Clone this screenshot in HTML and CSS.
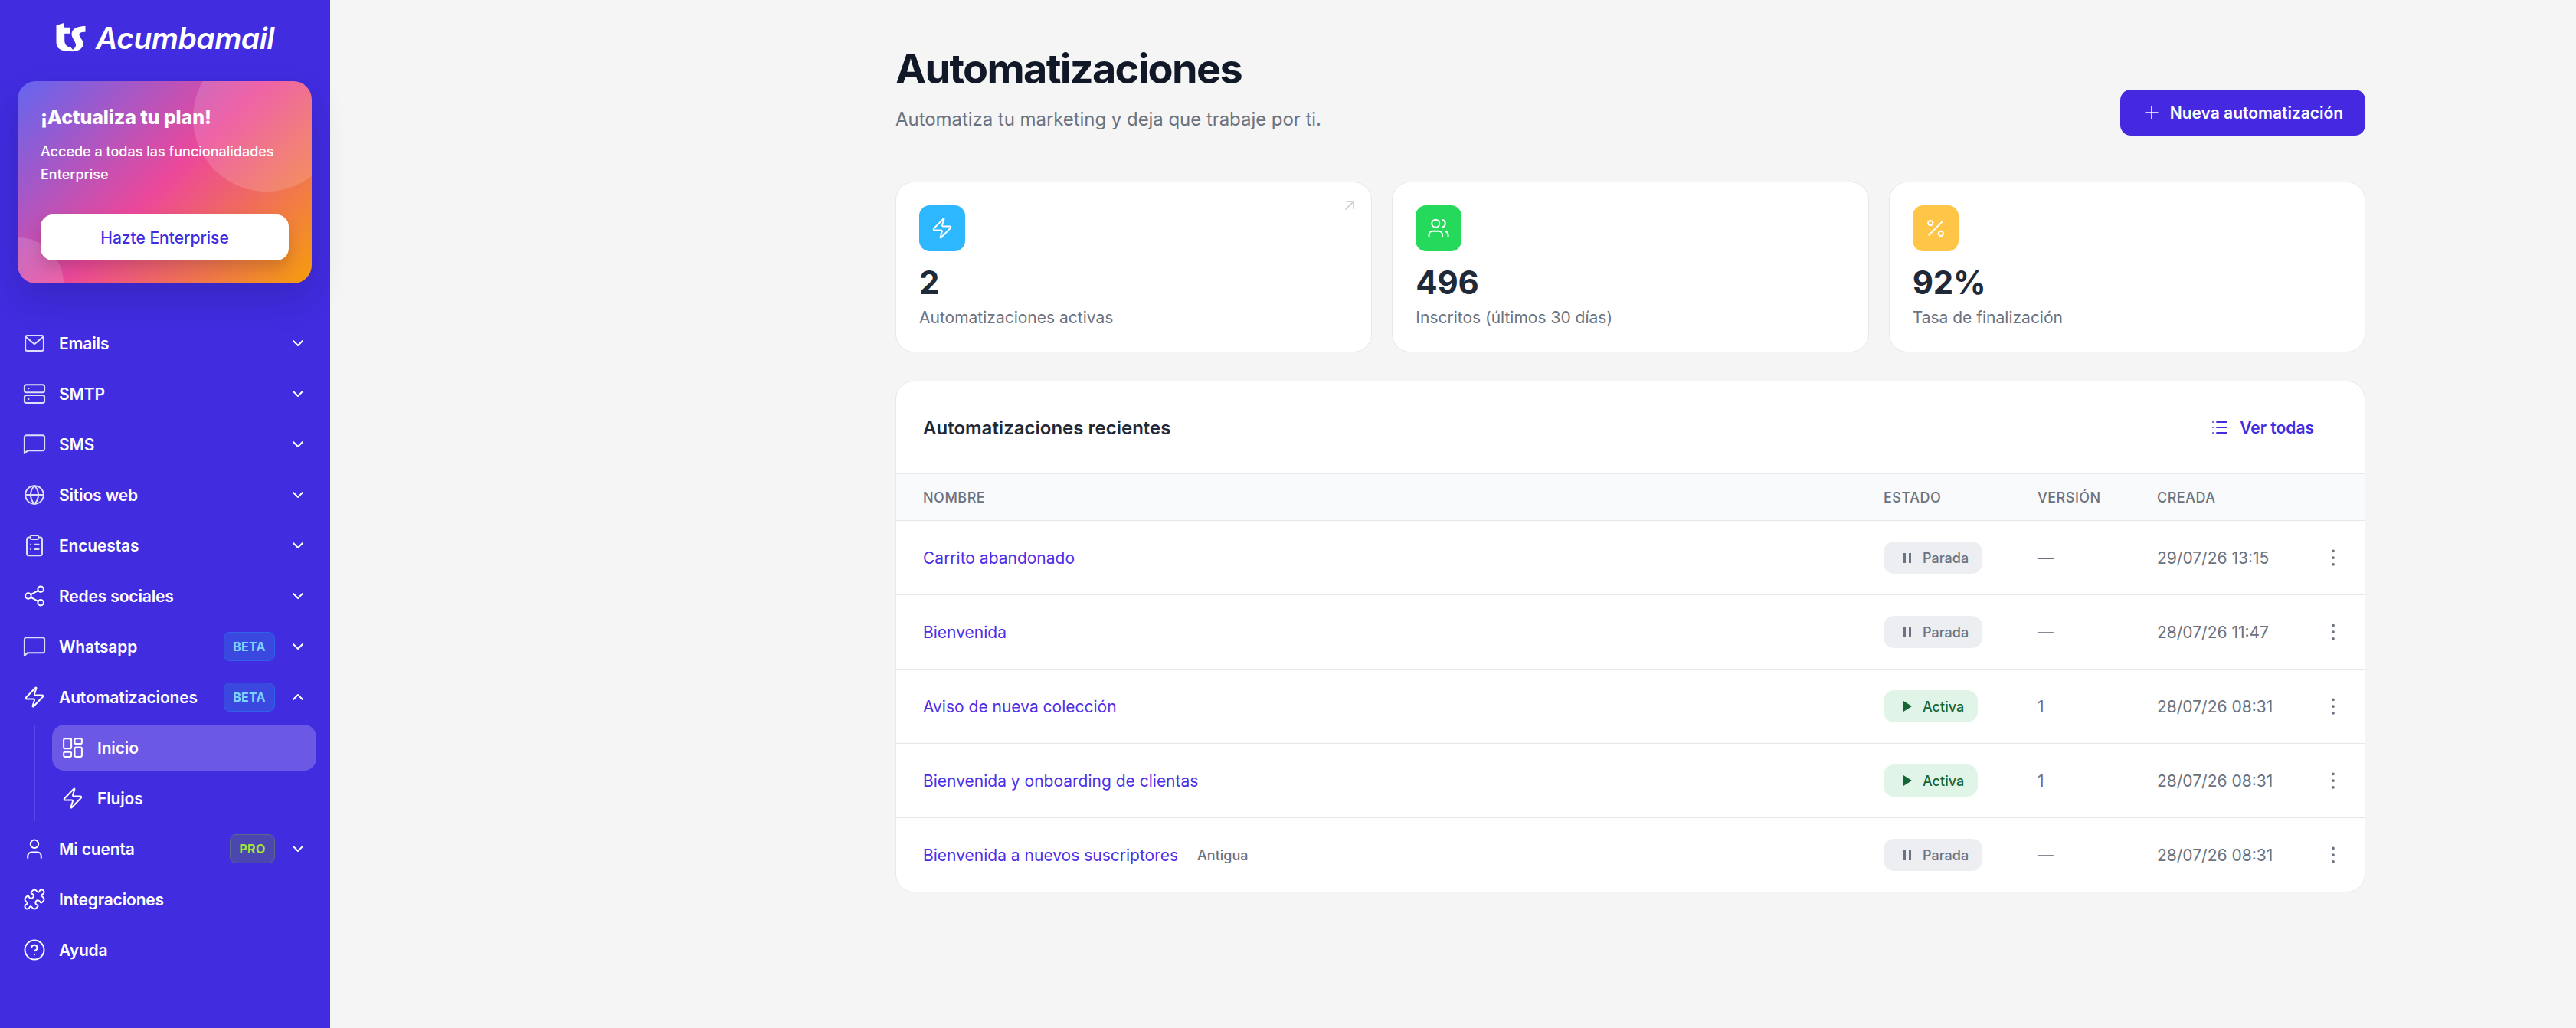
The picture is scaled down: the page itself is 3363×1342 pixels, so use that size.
FILE: index.html
```html
<!DOCTYPE html>
<html lang="es">
<head>
<meta charset="utf-8">
<title>Automatizaciones</title>
<link rel="stylesheet" href="styles.css">
</head>
<body>
<svg class="sprite" width="0" height="0" aria-hidden="true">
  <symbol id="i-mail" viewBox="0 0 24 24"><rect x="2.5" y="4" width="19" height="16" rx="2"/><path d="M3 5.5l9 7.5 9-7.5"/></symbol>
  <symbol id="i-server" viewBox="0 0 24 24"><rect x="1.5" y="2.5" width="21" height="8" rx="2"/><rect x="1.5" y="13.5" width="21" height="8" rx="2"/><path d="M6 6.5h.01M6 17.5h.01"/></symbol>
  <symbol id="i-chat" viewBox="0 0 24 24"><path d="M1.5 4.5a2 2 0 0 1 2-2h17a2 2 0 0 1 2 2v12a2 2 0 0 1-2 2H5l-3.5 3z"/></symbol>
  <symbol id="i-globe" viewBox="0 0 24 24"><circle cx="12" cy="12" r="9.5"/><path d="M2.5 12h19"/><path d="M12 2.5c3 3 4 6 4 9.500s-1 6.500-4 9.500c-3-3-4-6-4-9.500s1-6.500 4-9.500z"/></symbol>
  <symbol id="i-clip" viewBox="0 0 24 24"><rect x="8" y="1.500" width="8" height="4" rx="1"/><path d="M8 3.500H6a2 2 0 0 0-2 2v15a2 2 0 0 0 2 2h12a2 2 0 0 0 2-2v-15a2 2 0 0 0-2-2h-2"/><path d="M8 11h.01M8 16h.01M12 11h4.500M12 16h4.500"/></symbol>
  <symbol id="i-share" viewBox="0 0 24 24"><circle cx="18.500" cy="5" r="3"/><circle cx="5.500" cy="12" r="3"/><circle cx="18.500" cy="19" r="3"/><path d="M8.200 13.500l7.600 4M15.800 6.500l-7.600 4"/></symbol>
  <symbol id="i-zap" viewBox="0 0 24 24"><path d="M4 14a1 1 0 0 1-.78-1.630l9.900-10.200a.5.5 0 0 1 .86.46l-1.920 6.020A1 1 0 0 0 13 10h7a1 1 0 0 1 .78 1.630l-9.900 10.200a.5.5 0 0 1-.86-.46l1.920-6.020A1 1 0 0 0 11 14z"/></symbol>
  <symbol id="i-grid" viewBox="0 0 24 24"><rect x="2.500" y="2.500" width="8" height="10.500" rx="1.500"/><rect x="14" y="2.500" width="7.500" height="5.500" rx="1.500"/><rect x="14" y="11.500" width="7.500" height="10" rx="1.500"/><rect x="2.500" y="16.500" width="8" height="5" rx="1.500"/></symbol>
  <symbol id="i-user" viewBox="0 0 24 24"><circle cx="12" cy="7" r="4.200"/><path d="M5 21.500v-2a4 4 0 0 1 4-4h6a4 4 0 0 1 4 4v2"/></symbol>
  <symbol id="i-puzzle" viewBox="0 0 24 24"><path d="M19.439 7.850c-.049.322.059.648.289.878l1.568 1.568c.47.47.706 1.087.706 1.704s-.235 1.233-.706 1.704l-1.611 1.611a.98.98 0 0 1-.837.276c-.47-.07-.802-.48-.968-.925a2.501 2.501 0 1 0-3.214 3.214c.446.166.855.497.925.968a.979.979 0 0 1-.276.837l-1.610 1.610a2.404 2.404 0 0 1-1.705.707 2.402 2.402 0 0 1-1.704-.706l-1.568-1.568a1.026 1.026 0 0 0-.877-.29c-.493.074-.84.504-1.020.968a2.500 2.500 0 1 1-3.237-3.237c.464-.18.894-.527.967-1.020a1.026 1.026 0 0 0-.289-.877l-1.568-1.568A2.402 2.402 0 0 1 1.998 12c0-.617.236-1.234.706-1.704L4.230 8.770c.24-.24.581-.353.917-.303.515.077.877.528 1.073 1.010a2.500 2.500 0 1 0 3.259-3.259c-.482-.196-.933-.558-1.010-1.073-.05-.336.062-.676.303-.917l1.525-1.525A2.402 2.402 0 0 1 12 1.998c.617 0 1.234.236 1.704.706l1.568 1.568c.23.23.556.338.877.29.493-.074.84-.504 1.020-.968a2.500 2.500 0 1 1 3.237 3.237c-.464.18-.894.527-.967 1.020Z"/></symbol>
  <symbol id="i-help" viewBox="0 0 24 24"><circle cx="12" cy="12" r="10"/><path d="M9.090 9a3 3 0 0 1 5.830 1c0 2-3 3-3 3"/><path d="M12 17h.01"/></symbol>
  <symbol id="i-down" viewBox="0 0 24 24"><path d="M6 9l6 6 6-6"/></symbol>
  <symbol id="i-up" viewBox="0 0 24 24"><path d="M6 15l6-6 6 6"/></symbol>
  <symbol id="i-users" viewBox="0 0 24 24"><path d="M16 21v-2a4 4 0 0 0-4-4H6a4 4 0 0 0-4 4v2"/><circle cx="9" cy="7" r="4"/><path d="M22 21v-2a4 4 0 0 0-3-3.870"/><path d="M16 3.130a4 4 0 0 1 0 7.750"/></symbol>
  <symbol id="i-percent" viewBox="0 0 24 24"><path d="M19 5L5 19"/><circle cx="6.500" cy="6.500" r="2.500"/><circle cx="17.500" cy="17.500" r="2.500"/></symbol>
  <symbol id="i-arrow" viewBox="0 0 24 24"><path d="M7 17L17 7M8 7h9v9"/></symbol>
  <symbol id="i-plus" viewBox="0 0 24 24"><path d="M12 4v16M4 12h16"/></symbol>
  <symbol id="i-list" viewBox="0 0 24 24"><path d="M8 5h13M8 12h13M8 19h13M3 5h.01M3 12h.01M3 19h.01"/></symbol>
  <symbol id="i-dots" viewBox="0 0 24 24"><path d="M12 5h.01M12 12h.01M12 19h.01"/></symbol>
</svg>

<div class="app">
  <aside class="sidebar">
    <div class="logo">
      <svg class="logo-mark" viewBox="0 0 40 39"><path d="M0 3L10 0l1 6h7v8h-7v9c0 6 3 9 8 9l4 5C11 39 0 37 0 26z"/><path d="M39 4v8c-6 0-9 1-8 5 2 5 6 7 5 12-1 6-8 10-18 9 6-3 9-6 8-10-2-6-7-10-5-16 2-6 10-8 18-8z"/></svg>
      <span class="logo-text">Acumbamail</span>
    </div>

    <div class="promo">
      <span class="promo-circle promo-circle-big"></span>
      <span class="promo-circle promo-circle-small"></span>
      <h2 class="promo-title">¡Actualiza tu plan!</h2>
      <p class="promo-text">Accede a todas las funcionalidades Enterprise</p>
      <a class="promo-btn">Hazte Enterprise</a>
    </div>

    <nav class="nav">
      <a class="nav-row"><svg class="ico ico-dim"><use href="#i-mail"/></svg><span class="nav-label">Emails</span><svg class="chev"><use href="#i-down"/></svg></a>
      <a class="nav-row"><svg class="ico ico-dim"><use href="#i-server"/></svg><span class="nav-label">SMTP</span><svg class="chev"><use href="#i-down"/></svg></a>
      <a class="nav-row"><svg class="ico ico-dim"><use href="#i-chat"/></svg><span class="nav-label">SMS</span><svg class="chev"><use href="#i-down"/></svg></a>
      <a class="nav-row"><svg class="ico ico-dim"><use href="#i-globe"/></svg><span class="nav-label">Sitios web</span><svg class="chev"><use href="#i-down"/></svg></a>
      <a class="nav-row"><svg class="ico ico-dim"><use href="#i-clip"/></svg><span class="nav-label">Encuestas</span><svg class="chev"><use href="#i-down"/></svg></a>
      <a class="nav-row"><svg class="ico"><use href="#i-share"/></svg><span class="nav-label">Redes sociales</span><svg class="chev"><use href="#i-down"/></svg></a>
      <a class="nav-row"><svg class="ico ico-dim"><use href="#i-chat"/></svg><span class="nav-label">Whatsapp</span><span class="tag tag-beta">BETA</span><svg class="chev"><use href="#i-down"/></svg></a>
      <a class="nav-row"><svg class="ico"><use href="#i-zap"/></svg><span class="nav-label">Automatizaciones</span><span class="tag tag-beta">BETA</span><svg class="chev"><use href="#i-up"/></svg></a>
      <div class="subnav">
        <a class="sub-row sub-row-active"><svg class="ico"><use href="#i-grid"/></svg><span class="nav-label">Inicio</span></a>
        <a class="sub-row"><svg class="ico"><use href="#i-zap"/></svg><span class="nav-label">Flujos</span></a>
      </div>
      <a class="nav-row"><svg class="ico"><use href="#i-user"/></svg><span class="nav-label">Mi cuenta</span><span class="tag tag-pro">PRO</span><svg class="chev"><use href="#i-down"/></svg></a>
      <a class="nav-row"><svg class="ico"><use href="#i-puzzle"/></svg><span class="nav-label">Integraciones</span></a>
      <a class="nav-row"><svg class="ico"><use href="#i-help"/></svg><span class="nav-label">Ayuda</span></a>
    </nav>
  </aside>

  <main class="main">
    <header class="page-head">
      <div>
        <h1 class="page-title">Automatizaciones</h1>
        <p class="page-sub">Automatiza tu marketing y deja que trabaje por ti.</p>
      </div>
      <a class="btn-primary"><svg class="btn-ico"><use href="#i-plus"/></svg>Nueva automatización</a>
    </header>

    <section class="stats">
      <article class="stat">
        <svg class="stat-arrow"><use href="#i-arrow"/></svg>
        <span class="stat-icon stat-blue"><svg class="stat-svg"><use href="#i-zap"/></svg></span>
        <div class="stat-num">2</div>
        <div class="stat-label">Automatizaciones activas</div>
      </article>
      <article class="stat">
        <span class="stat-icon stat-green"><svg class="stat-svg"><use href="#i-users"/></svg></span>
        <div class="stat-num">496</div>
        <div class="stat-label">Inscritos (últimos 30 días)</div>
      </article>
      <article class="stat">
        <span class="stat-icon stat-yellow"><svg class="stat-svg"><use href="#i-percent"/></svg></span>
        <div class="stat-num">92%</div>
        <div class="stat-label">Tasa de finalización</div>
      </article>
    </section>

    <section class="panel">
      <div class="panel-head">
        <h2 class="panel-title">Automatizaciones recientes</h2>
        <a class="panel-link"><svg class="link-ico"><use href="#i-list"/></svg>Ver todas</a>
      </div>
      <div class="tr thead">
        <span>NOMBRE</span><span>ESTADO</span><span>VERSIÓN</span><span>CREADA</span><span></span>
      </div>
      <div class="tr row">
        <span class="name"><a class="name-link">Carrito abandonado</a></span>
        <span><span class="status status-off"><span class="pause"></span>Parada</span></span>
        <span class="cell">—</span><span class="cell">29/07/26 13:15</span>
        <span class="act"><svg class="dots"><use href="#i-dots"/></svg></span>
      </div>
      <div class="tr row">
        <span class="name"><a class="name-link">Bienvenida</a></span>
        <span><span class="status status-off"><span class="pause"></span>Parada</span></span>
        <span class="cell">—</span><span class="cell">28/07/26 11:47</span>
        <span class="act"><svg class="dots"><use href="#i-dots"/></svg></span>
      </div>
      <div class="tr row">
        <span class="name"><a class="name-link">Aviso de nueva colección</a></span>
        <span><span class="status status-on"><span class="play"></span>Activa</span></span>
        <span class="cell">1</span><span class="cell">28/07/26 08:31</span>
        <span class="act"><svg class="dots"><use href="#i-dots"/></svg></span>
      </div>
      <div class="tr row">
        <span class="name"><a class="name-link">Bienvenida y onboarding de clientas</a></span>
        <span><span class="status status-on"><span class="play"></span>Activa</span></span>
        <span class="cell">1</span><span class="cell">28/07/26 08:31</span>
        <span class="act"><svg class="dots"><use href="#i-dots"/></svg></span>
      </div>
      <div class="tr row row-last">
        <span class="name"><a class="name-link">Bienvenida a nuevos suscriptores</a><span class="old">Antigua</span></span>
        <span><span class="status status-off"><span class="pause"></span>Parada</span></span>
        <span class="cell">—</span><span class="cell">28/07/26 08:31</span>
        <span class="act"><svg class="dots"><use href="#i-dots"/></svg></span>
      </div>
    </section>
  </main>
</div>
</body>
</html>
```
FILE: styles.css
```css
* { box-sizing: border-box; }
html, body { margin: 0; padding: 0; height: 100%; }
body {
  font-family: "Inter", "Liberation Sans", sans-serif;
  background: #f5f5f5;
  color: #111827;
  overflow: hidden;
}
.sprite { position: absolute; }
.app { display: flex; min-height: 100vh; }

/* Sidebar */
.sidebar {
  width: 431px;
  flex: none;
  background: #412ce0;
  color: #fff;
  min-height: 1342px;
}
.logo {
  display: flex;
  align-items: center;
  justify-content: center;
  gap: 12px;
  height: 106px;
  padding-bottom: 8px;
}
.logo-mark { width: 40px; height: 38px; fill: #fff; }
.logo-text { font-size: 39px; font-weight: 600; font-style: italic; letter-spacing: -0.5px; }

.promo {
  position: relative;
  overflow: hidden;
  margin-left: 23px;
  width: 384px;
  height: 264px;
  padding: 30px;
  border-radius: 24px;
  background: linear-gradient(135deg, #6366f1 0%, #ec4899 50%, #f59e0b 100%);
  box-shadow: 0 20px 50px rgba(0,0,0,.14);
}
.promo-circle { position: absolute; border-radius: 50%; background: rgba(255,255,255,.15); }
.promo-circle-big { width: 192px; height: 192px; top: -48px; right: -37px; }
.promo-circle-small { width: 120px; height: 120px; left: -60px; bottom: -60px; }
.promo-title { position: relative; margin: 0; font-size: 25px; line-height: 34px; font-weight: 800; letter-spacing: -.1px; }
.promo-text { position: relative; margin: 13px 0 0; font-size: 18px; line-height: 30px; font-weight: 500; }
.promo-btn {
  position: relative;
  display: flex;
  align-items: center;
  justify-content: center;
  margin-top: 37px;
  height: 60px;
  border-radius: 16px;
  background: #fff;
  color: #412ce0;
  font-size: 21px;
  font-weight: 500;
  box-shadow: 0 10px 20px rgba(0,0,0,.15);
}

.nav { margin-top: 45px; }
.nav-row {
  display: flex;
  align-items: center;
  height: 66px;
  padding: 0 30px;
  gap: 18px;
}
.ico {
  width: 30px; height: 30px; flex: none;
  fill: none; stroke: #fff; stroke-width: 1.600; stroke-linecap: round; stroke-linejoin: round;
}
.ico-dim { opacity: .84; }
.chev {
  width: 24px; height: 24px; flex: none;
  fill: none; stroke: #fff; stroke-width: 2; stroke-linecap: round; stroke-linejoin: round;
}
.nav-label { flex: 1; font-size: 21px; font-weight: 600; letter-spacing: -.15px; white-space: nowrap; margin-left: -1px; }
.tag {
  display: flex; align-items: center; justify-content: center;
  height: 38px; border-radius: 8px; border: 1px solid;
  font-size: 16px; font-weight: 700; letter-spacing: .3px; flex: none;
}
.tag-beta { width: 67px; color: #7dd3fc; background: #3b48e0; border-color: #2f62e8; }
.tag-pro { width: 59px; color: #a3e635; background: #4b46b0; border-color: #5d6a84; }

.subnav {
  display: flex; flex-direction: column; gap: 6px;
  margin: 3px 0 3px 44px;
  padding-left: 22px;
  border-left: 2px solid #5b49e5;
}
.sub-row {
  display: flex; align-items: center; gap: 18px;
  width: 345px; height: 60px;
  padding-left: 12px;
  border-radius: 16px;
}
.sub-row-active { background: #6b58e5; }

/* Main */
.main { margin-left: 738px; width: 1919px; padding-top: 55px; flex: none; }
.page-head { display: flex; justify-content: space-between; align-items: flex-end; margin-bottom: 60px; }
.page-title { margin: 0; font-size: 54px; line-height: 70px; font-weight: 700; color: #111827; letter-spacing: -1.700px; }
.page-sub { margin: 15px 0 5px; font-size: 24px; line-height: 32px; color: #6b7280; letter-spacing: -.05px; }
.btn-primary {
  display: flex; align-items: center; justify-content: center; gap: 12px;
  width: 320px; height: 60px; border-radius: 14px;
  background: #4529e0; color: #fff;
  font-size: 21px; font-weight: 600;
}
.btn-ico { width: 24px; height: 24px; fill: none; stroke: #fff; stroke-width: 1.600; stroke-linecap: round; }

.stats { display: grid; grid-template-columns: repeat(3, 1fr); gap: 26px; }
.stat {
  position: relative;
  height: 223px;
  padding: 30px;
  background: #fff;
  border: 1px solid #e8e8ea;
  border-radius: 24px;
}
.stat-arrow {
  position: absolute; top: 18px; right: 16px;
  width: 24px; height: 24px;
  fill: none; stroke: #d1d5db; stroke-width: 2; stroke-linecap: round; stroke-linejoin: round;
}
.stat-icon { display: flex; align-items: center; justify-content: center; width: 60px; height: 60px; border-radius: 14px; }
.stat-blue { background: #2db7ff; }
.stat-green { background: #25d95a; }
.stat-yellow { background: #ffc547; }
.stat-svg { width: 30px; height: 30px; fill: none; stroke: #fff; stroke-width: 1.600; stroke-linecap: round; stroke-linejoin: round; }
.stat-num { margin-top: 16px; font-size: 42px; line-height: 50px; font-weight: 700; color: #1f2937; letter-spacing: -.2px; }
.stat-label { margin-top: 6px; font-size: 21px; line-height: 30px; color: #6b7280; }

.panel {
  margin-top: 37px;
  background: #fff;
  border: 1px solid #e8e8ea;
  border-radius: 24px;
  overflow: hidden;
}
.panel-head {
  display: flex; align-items: center; justify-content: space-between;
  height: 121px;
  padding: 0 66px 0 35px;
  border-bottom: 1px solid #e5e7eb;
}
.panel-title { margin: 0; font-size: 24px; font-weight: 600; color: #1f2937; }
.panel-link { display: flex; align-items: center; gap: 14px; color: #412ce0; font-size: 21px; font-weight: 600; }
.link-ico { width: 24px; height: 24px; fill: none; stroke: #412ce0; stroke-width: 1.800; stroke-linecap: round; }

.tr {
  display: grid;
  grid-template-columns: 1254px 201px 156px 1fr 60px;
  align-items: center;
  padding: 0 29px 0 35px;
}
.thead {
  height: 61px;
  background: #f9fafb;
  border-bottom: 1px solid #e5e7eb;
  font-size: 18px; font-weight: 500; letter-spacing: .5px; color: #6b7280;
}
.row { height: 97px; border-bottom: 1px solid #e5e7eb; font-size: 21px; color: #6b7280; }
.row-last { border-bottom: 0; height: 96px; }
.name { display: flex; align-items: center; gap: 25px; }
.name-link { color: #4f2fe6; font-size: 21px; }
.old { font-size: 18px; color: #6b7280; font-weight: 500; }
.cell { white-space: nowrap; }
.act { display: flex; justify-content: flex-end; }
.dots { width: 30px; height: 30px; margin-right: -3px; fill: none; stroke: #6b7280; stroke-width: 3; stroke-linecap: round; }

.status {
  display: inline-flex; align-items: center; gap: 15px;
  height: 42px; padding: 0 18px 0 26px;
  border-radius: 14px;
  font-size: 18px; font-weight: 500;
}
.status-off { background: #eceef1; color: #6b7280; }
.status-on { background: #e1f4e8; color: #166534; }
.pause { width: 10px; height: 13px; border-left: 3px solid #6b7280; border-right: 3px solid #6b7280; flex: none; }
.play { width: 0; height: 0; border-left: 11px solid #166534; border-top: 7px solid transparent; border-bottom: 7px solid transparent; flex: none; margin-right: -1px; }
```
